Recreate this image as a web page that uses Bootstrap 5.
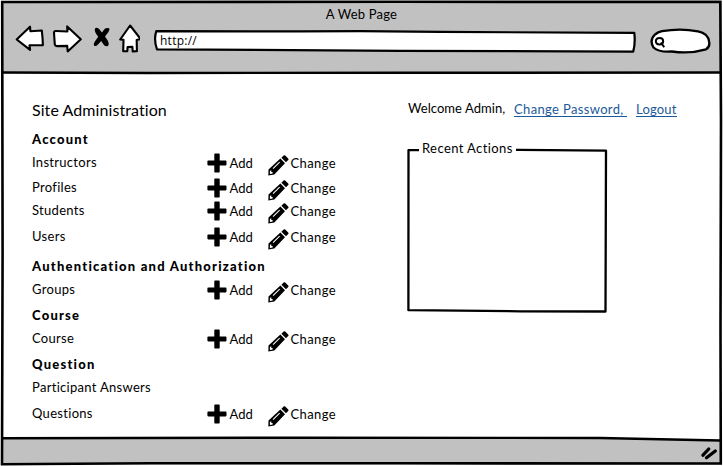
<!DOCTYPE html>
<html lang="en">
<head>
<meta charset="utf-8">
<meta name="viewport" content="width=device-width, initial-scale=1">
<title>A Web Page</title>
<link href="https://cdn.jsdelivr.net/npm/bootstrap@5.3.0/dist/css/bootstrap.min.css" rel="stylesheet">
<style>
body{width:723px;height:466px;overflow:hidden;font-family:Lato,sans-serif;font-size:13px;line-height:20px;color:#000;background:#fff}
.window{width:723px;height:466px}
.chrome{height:72px;background:#c1c1c1;padding-top:4px}
.title{line-height:20px;height:20px;letter-spacing:.2px}
.tools{height:30px;padding-left:15px}
.tools svg,.sym{display:block;flex:none}
.address{width:483px;height:24px;margin-left:12px;margin-top:6px;font:12px/20px "Open Sans",sans-serif;letter-spacing:.25px}
.address .url{padding-left:8px;padding-top:1px}
.search{margin-left:15px;margin-top:3px}
.sketch{position:absolute;left:0;top:0;pointer-events:none}
.status{height:28px;background:#c1c1c1;padding:8px 4px 0 0}
.pane{padding:28px 0 0 32px}
.admin{display:grid;width:376px;grid-template-rows:29px 23px 25px 23px 26px 30px 23px 26px 23px 26px 23px 26px 24px;align-items:start}
.line{height:20px}
.site{font-size:16px;letter-spacing:.08px}
.group{font-weight:900;letter-spacing:1.23px}
.name{width:175px;letter-spacing:.3px}
.add{width:60.500px}
.add .sym{margin-top:.5px}
.add span,.change span{padding-top:1px}
.add span{margin-left:2.500px}
.change span{margin-left:2px;letter-spacing:.4px}
.change .sym{margin-top:3px}
.session{height:20px;margin-top:-1px}
.session a{color:#1b5a99;text-decoration:none;border-bottom:1px solid #1b5a99;line-height:13px;height:14px;margin-top:4px;white-space:nowrap}
.welcome{width:106px;letter-spacing:.05px;margin-top:-1px}
.session .password{width:113px;margin-right:9px;letter-spacing:.35px}
.session .logout{width:41px;letter-spacing:.2px}
.recent{width:202px;height:176px;margin-top:18px}
.recent .legend{position:absolute;left:11px;top:1px;background:#fff;padding:0 3px;line-height:20px;white-space:nowrap;letter-spacing:.4px}
</style>
</head>
<body>
<svg width="0" height="0" class="position-absolute">
  <symbol id="plus" viewBox="0 0 20 20"><path d="M8 .5h4q.7 0 .7.7V7.600h6q.8 0 .8.8v3.200q0 .8-.8.8h-6v6.400q0 .7-.7.7H8q-.7 0-.7-.7v-6.400H1.200q-.8 0-.8-.8V8.400q0-.8.8-.8h6.100V1.200q0-.7.7-.7z"/></symbol>
  <symbol id="pencil" viewBox="0 0 21 21"><path d="M13.400 2.700 15.600.5q.8-.7 1.600 0l3 3.100q.7.800 0 1.500L18 7.300z"/><path fill-rule="evenodd" d="M12.400 3.600 17 8.300 6.300 19.400.3 20.500.5 14.600zM1.900 16.500v2.600l2.700-.5v-1.500H3.300v-1.500l-.9-.1zM4.700 13.200l.7.700 6.600-6.500-.7-.7z"/></symbol>
</svg>
<div class="window position-relative d-flex flex-column">
  <header class="chrome">
    <div class="title text-center">A Web Page</div>
    <div class="tools d-flex">
      <svg width="125" height="30" viewBox="15 22 125 30" fill="#fff" stroke="#000" stroke-width="2.100" stroke-linejoin="round">
        <path d="M16.700 37.500 30 24.700l.4 4.500 11.400-.7q.9 7.500 1.100 14.600l-13.400.1.600 4.700z"/>
        <path d="M54 30.700q0-1.800 2-1.700l11.400.5-.2-5.100L80.800 37.200 67.700 49.400l-.5-5.500-10 .2q-2 .1-2.400-1.500z"/>
        <path fill="#000" stroke="none" d="M95.300 26q2.600-.7 4.300 1.500l2.300 3 2.500-3.300q1.500-1.700 4.900-.9.700 2.200-1 3.900l-3.300 4.300 3 4.600q1.400 2.700 0 5-3.500.6-4.800-2.100l-2-3-3 3.200q-1.900 2.200-4 1.800-1-2.200.5-4.300l3.500-5-2.600-3.800q-1.900-2.600-.3-4.900z"/>
        <path d="M130.100 23.500 120.200 37.500l3.300.3-.3 11.400 4.100.1.300-4.300 4.800-.1.300 4.500 4.200-.1-.2-11.400 4-.9z"/>
      </svg>
      <div class="address position-relative">
        <svg class="sketch" width="484" height="24" viewBox="152 30 484 24"><path fill="#fff" stroke="#000" stroke-width="2.200" stroke-linejoin="round" d="M156.300 31.200 300 31.400 360 31.200 440 31.900 634.300 32.900Q635.500 44 633.200 51.600L400 50.800 157 49.300Q153.500 40 156.300 31.200z"/></svg>
        <div class="url position-relative">http://</div>
      </div>
      <svg class="search" width="62" height="28" viewBox="650 27 62 28" fill="#fff" stroke="#000" stroke-width="2"><path stroke-width="2.300" d="M662 31.200Q680 28 698 31.300 708 33 709.200 42 710 47 706 49.300 690 54 672 51.500 659 52.500 653.500 47.500 649 40 655 34.500 658 32 662 31.200z"/><path stroke-width="2" d="M659.700 38Q656 38 655.800 41.200 656 44.500 659.600 44.500 663.200 44.200 663.200 41.200 663 38 659.700 38zM661 42.500l3.200 4.700"/></svg>
    </div>
  </header>
  <main class="pane flex-grow-1 d-flex">
    <section class="admin">
      <div class="site line">Site Administration</div>
      <div class="group line">Account</div>
      <div class="line d-flex"><span class="name">Instructors</span><div class="add d-flex"><svg class="sym" width="20" height="20"><use href="#plus"/></svg><span>Add</span></div><div class="change d-flex"><svg class="sym" width="21" height="21"><use href="#pencil"/></svg><span>Change</span></div></div>
      <div class="line d-flex"><span class="name">Profiles</span><div class="add d-flex"><svg class="sym" width="20" height="20"><use href="#plus"/></svg><span>Add</span></div><div class="change d-flex"><svg class="sym" width="21" height="21"><use href="#pencil"/></svg><span>Change</span></div></div>
      <div class="line d-flex"><span class="name">Students</span><div class="add d-flex"><svg class="sym" width="20" height="20"><use href="#plus"/></svg><span>Add</span></div><div class="change d-flex"><svg class="sym" width="21" height="21"><use href="#pencil"/></svg><span>Change</span></div></div>
      <div class="line d-flex"><span class="name">Users</span><div class="add d-flex"><svg class="sym" width="20" height="20"><use href="#plus"/></svg><span>Add</span></div><div class="change d-flex"><svg class="sym" width="21" height="21"><use href="#pencil"/></svg><span>Change</span></div></div>
      <div class="group line">Authentication and Authorization</div>
      <div class="line d-flex"><span class="name">Groups</span><div class="add d-flex"><svg class="sym" width="20" height="20"><use href="#plus"/></svg><span>Add</span></div><div class="change d-flex"><svg class="sym" width="21" height="21"><use href="#pencil"/></svg><span>Change</span></div></div>
      <div class="group line">Course</div>
      <div class="line d-flex"><span class="name">Course</span><div class="add d-flex"><svg class="sym" width="20" height="20"><use href="#plus"/></svg><span>Add</span></div><div class="change d-flex"><svg class="sym" width="21" height="21"><use href="#pencil"/></svg><span>Change</span></div></div>
      <div class="group line">Question</div>
      <div class="line d-flex"><span class="name">Participant Answers</span></div>
      <div class="line d-flex"><span class="name">Questions</span><div class="add d-flex"><svg class="sym" width="20" height="20"><use href="#plus"/></svg><span>Add</span></div><div class="change d-flex"><svg class="sym" width="21" height="21"><use href="#pencil"/></svg><span>Change</span></div></div>
    </section>
    <aside>
      <div class="session d-flex"><span class="welcome">Welcome Admin,</span><a class="password" href="#">Change Password,&nbsp;</a><a class="logout" href="#">Logout</a></div>
      <div class="recent position-relative">
        <svg class="sketch" width="202" height="176" viewBox="408 137.500 202 176" overflow="visible"><path fill="none" stroke="#000" stroke-width="2.300" stroke-linejoin="round" d="M408.500 150.700 520 150.300 606 151.200 605.500 312 520 311.800 408.400 310.700z"/></svg>
        <span class="legend">Recent Actions</span>
      </div>
    </aside>
  </main>
  <footer class="status d-flex justify-content-end">
    <svg width="18" height="18" viewBox="701 446 18 18" stroke="#000" stroke-width="3.200" stroke-linecap="round"><path d="M703 455.200 708.700 449M706.500 457.800 715.300 451"/></svg>
  </footer>
  <svg class="sketch" width="723" height="466" viewBox="0 0 723 466" fill="none" stroke="#000" stroke-width="2.400">
    <path fill="#fff" stroke="none" d="M0 0h723v1H0zM0 0h1v466H0zM722 0h1v466h-1zM0 464.500h723v1.500H0zM400 437l320 0v3z"/>
    <path stroke-width="2.600" d="M2.200 2 400 1.800 720.300 1.900 721 120 720.500 330 720.800 463.500 400 463.300 150 463.200 2 464.300 2.600 250z"/>
    <path d="M2 72.500 150 73 400 72.800 720 72.500M2 438.300 300 437.700 600 438 720 440.500"/>
  </svg>
</div>
<script src="https://cdn.jsdelivr.net/npm/bootstrap@5.3.0/dist/js/bootstrap.bundle.min.js"></script>
</body>
</html>
